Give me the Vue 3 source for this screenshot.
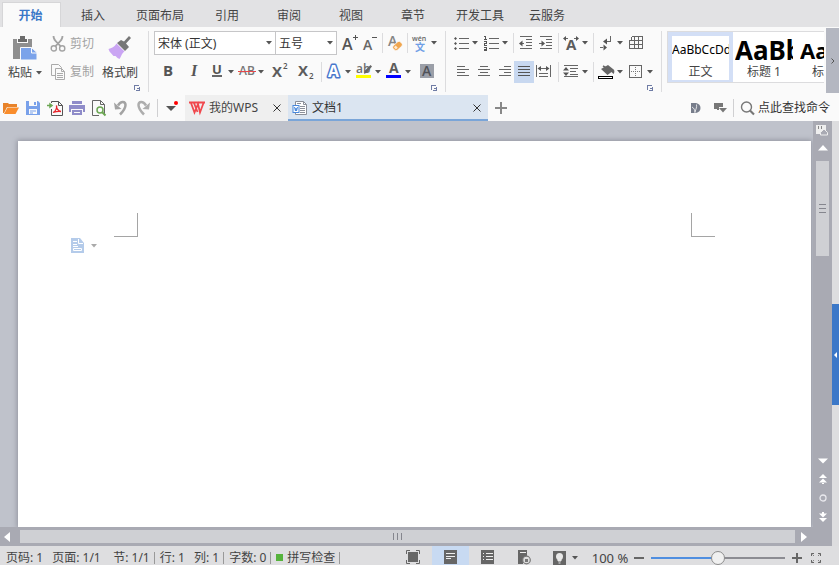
<script setup>
import { ref, computed } from 'vue'

const caret = '<path d="M0 0h6L3 3.600z" fill="#555"/>'

const letter = (x, y, size, text, extra = '') =>
  `<text x="${x}" y="${y}" font-size="${size}" font-family="Open Sans, sans-serif" ${extra}>${text}</text>`

const crisp = (d, color = '#666', width = 1) =>
  `<path d="${d}" fill="none" stroke="${color}" stroke-width="${width}" shape-rendering="crispEdges"/>`

const icons = {
  cut: '<g fill="none" stroke="#a3a3a3" stroke-width="1.4"><circle cx="3.800" cy="12.400" r="2.600"/><circle cx="12.200" cy="12.400" r="2.600"/><path d="M3.500 0c0 4 2 5 7.200 10.300M12.500 0c0 4-2 5-7.200 10.300" stroke-width="1.800"/></g>',
  copy: '<g fill="#fafafa" stroke="#aaa"><path d="M1.500.5h7l3 3v8h-10z"/><path d="M5.500 4.500h6l3 3v8h-9z"/><path d="M11.500 4.500v3h3M7 9.500h6M7 11.500h6M7 13.500h6" fill="none"/></g>',
  grow: letter(0, 15, 16, 'A', 'font-weight="600" fill="#555"') + crisp('M11 2.500h5M13.500 0v5', '#555'),
  shrink: letter(1, 15, 14, 'A', 'font-weight="600" fill="#666"') + crisp('M10 2.500h5', '#555'),
  eraser: letter(1, 11, 14, 'A', 'font-weight="600" fill="#858585"') + '<g transform="rotate(-42 10.500 11)"><rect x="5.500" y="8" width="10" height="6" rx="2" fill="#f0a64f" stroke="#fafafa" stroke-width=".8"/><rect x="7" y="9.500" width="2.500" height="3" fill="#fde9d0"/></g>',
  phonetic: letter(0, 6, 7, 'wén', 'font-weight="600" fill="#666"') + '<text x="3" y="16" font-size="10" font-family="Noto Sans CJK SC, sans-serif" font-weight="700" fill="#6f9fe6">文</text>',
  bold: letter(3, 12, 15, 'B', 'font-weight="700" fill="#555"'),
  italic: '<text x="5" y="12" font-size="16" font-family="Liberation Serif, serif" font-style="italic" font-weight="700" fill="#555">I</text>',
  underline: letter(3, 10, 13, 'U', 'font-weight="700" fill="#555"') + crisp('M3 12h10', '#666', 2),
  strike: letter(0, 11, 12, 'AB', 'font-weight="600" fill="#777"') + crisp('M-1 7.500h18', '#e8474c'),
  superscript: letter(0, 13, 15, 'X', 'font-weight="700" fill="#5c5c5c"') + letter(11, 5, 8, '2', 'font-weight="600" fill="#555"'),
  subscript: letter(0, 12, 15, 'X', 'font-weight="700" fill="#5c5c5c"') + letter(11, 15, 8, '2', 'font-weight="600" fill="#555"'),
  effect: letter(2, 13, 16, 'A', 'font-weight="700" fill="#fff" stroke="#4a78cc" stroke-width="3" stroke-linejoin="round" paint-order="stroke"'),
  highlight: letter(0, 9, 12, 'ab', 'font-weight="600" fill="#707070"') + '<path d="M8 10l1-3.500L14.500 1l1.500 1.500L11 8.500z" fill="#666"/><path d="M0 11h15v3H0z" fill="#ff0"/>',
  color: letter(3, 9, 14, 'A', 'font-weight="700" fill="#5c5c5c"') + '<path d="M0 11h15v3H0z" fill="#00f"/>',
  shade: '<rect x="1" y="0" width="14" height="14" fill="#9b9fa8"/>' + letter(3, 12, 14, 'A', 'font-weight="600" fill="#505259"'),
  bullets: crisp('M6 3.500h10M6 8.500h10M6 13.500h10') + '<path d="M1 3.500L2.500 2 4 3.500 2.500 5zM1 8.500L2.500 7 4 8.500 2.500 10zM1 13.500L2.500 12 4 13.500 2.500 15z" fill="#555"/>',
  numbers: crisp('M6 3.500h10M6 8.500h10M6 13.500h10') + crisp('M1 1.500h1.500M2.500 1v4M1 4.500h3M1 6.500h2.500M3.500 6v2M1 8.500h2.500M1.500 8v2M1 10.500h3M1 12.500h2.500M3.500 12v4M1 14h2.500M1 15.500h3', '#555'),
  outdent: crisp('M2 1.500h12M8 4.500h6M8 7.500h6M8 10.500h6M2 13.500h12M2 8.500h4') + '<path d="M1 8.500L4.500 5.500v6z" fill="#555"/>',
  indent: crisp('M2 1.500h12M8 4.500h6M8 7.500h6M8 10.500h6M2 13.500h12M1 8.500h4') + '<path d="M7 8.500L3.500 5.500v6z" fill="#555"/>',
  scale: letter(3, 15, 15, 'A', 'font-weight="700" fill="#5c5c5c"') + crisp('M1 3.500h4M11 3.500h4') + '<path d="M0 3.500L3 1v5zM16 3.500L13 1v5z" fill="#555"/>',
  wrap: crisp('M12.500 1v5H8M2 12.500h3', '#666') + '<path d="M5 6.500l4-3v6zM9 12.500l-3.500-3v6z" fill="#555"/>',
  table: crisp('M3.500 1.500h11v12h-13v-8M3.500 1.500v4M1 5.500h14M1 9.500h14M6.500 1.500v12M10.500 1.500v12'),
  left: crisp('M1 2.500h8M1 5.500h12M1 8.500h8M1 11.500h12'),
  center: crisp('M4 2.500h8M2 5.500h12M4 8.500h8M2 11.500h12'),
  right: crisp('M8 2.500h7M3 5.500h12M8 8.500h7M3 11.500h12'),
  justify: crisp('M2 2.500h12M2 5.500h12M2 8.500h12M2 11.500h12', '#555'),
  distribute: crisp('M.5 1v12M14.500 1v12M3 4.500h9M3 9.500h9M3 12.500h9') + '<path d="M1.500 4.500L5 2v5zM13.500 4.500L10 2v5z" fill="#555"/>',
  spacing: crisp('M1 1.500h14M7 4.500h8M7 7.500h6M7 10.500h8M1 12.500h14') + '<path d="M0 6.500l3-3.500 3 3.500zM0 8.500L3 12l3-3.500z" fill="#555"/>',
  bucket: '<path d="M3 5l7-4 5 4c2 1 1.500 4 .5 5l-2-2-4 3z" fill="#666"/><path d="M5 2l5 3" stroke="#666" stroke-width="1.500"/><rect x=".500" y="12.500" width="14" height="2" fill="#fff" stroke="#000" shape-rendering="crispEdges"/>',
  border: crisp('M1.500 1.500h12v12h-12z') + '<path d="M7.500 3v10M3 7.500h10" stroke="#777" stroke-dasharray="1 1" fill="none" shape-rendering="crispEdges"/>',
  open: '<path d="M0 3h5l1 1h8v3H4l-3 6H0z" fill="#e8832a"/><path d="M4.500 7.500H16L12.500 14H1z" fill="#f98d2c"/>',
  save: '<path d="M1 1h12l2 2v12H1z" fill="#79a1ea"/><path d="M4 1h8v5H4zM4 9h8v5H4z" fill="#fafafa"/><path d="M9 2h2v3H9z" fill="#79a1ea"/><path d="M5 11h6M5 13h3" stroke="#79a1ea"/>',
  pdf: '<path d="M4.500 3V1.500h7l4 4v10h-11V9" fill="none" stroke="#555"/><path d="M11.500 1.500v4h4" fill="none" stroke="#555"/><path d="M6 12.500c3-1 4-5 3.500-7 0 3 2 5.500 4.500 6-3-.5-5 0-8 1z" fill="none" stroke="#e8262d" stroke-width="1.300"/><path d="M0 5.500h3M3 4l2 1.500L3 7z" fill="#6ba652" stroke="#6ba652" stroke-width="1.500"/>',
  print: '<path d="M3 1h10v3H3zM0 5h16v7h-2V9H2v3H0zM3 10h10v5H3z" fill="#8f8cc9"/><path d="M5 12.500h6" stroke="#fafafa"/>',
  preview: '<path d="M8 15.500H1.500v-15h8l4 4v10M9.500.5v4h4" fill="none" stroke="#666"/><circle cx="9" cy="10" r="3" fill="#fafafa" stroke="#6ba652" stroke-width="1.500"/><path d="M11 12l3.500 3.500" stroke="#6ba652" stroke-width="2"/>',
  undo: '<path d="M5 5.500c3-5 7.500-4 7.500-.5 0 4-3 7-5.500 9.500" fill="none" stroke="#a3a3a3" stroke-width="2.500"/><path d="M1 2.500l1 7 6.500-.5z" fill="#a3a3a3"/>',
  redo: '<path d="M11 5.500C8 .5 3.500 1.500 3.500 5c0 4 3 7 5.500 9.500" fill="none" stroke="#adadad" stroke-width="2.500"/><path d="M15 2.500l-1 7L7.500 9z" fill="#adadad"/>',
  wps: '<path d="M0 2.500h16M2 3l3.500 9.500L9 4l2 8.500L14.500 3M5 3l3.500 9" fill="none" stroke="#f0484d" stroke-width="1.800"/>',
  doc: '<path d="M3.500 5V1.500h8l3 3v10h-11V12" fill="#fff" stroke="#8b8f99"/><path d="M11.500 1.500v3h3M8 6.500h5M8 8.500h5M8 10.500h5M8 12.500h5M5 3.500h4" fill="none" stroke="#8b8f99"/><rect x="1" y="5.500" width="6" height="7" fill="#fff" stroke="#4787dc"/><path d="M2.500 7l1 4L4 8l.5 3 1-4" stroke="#4787dc" fill="none"/>',
  docer: '<path d="M4 3h5c6 1 6 9 0 10H4z" fill="#777d8b"/><path d="M5 7c2 1 3 3 3 6M9.500 4.500C10 7 9 9 8 12" stroke="#fafafa" fill="none" stroke-width=".800"/>',
  skin: '<path d="M3 3h9v4H8v3H6V9H3z" fill="#777"/><path d="M8 8h8l-4 4.500z" fill="#777"/>',
  search: '<circle cx="6.500" cy="7" r="5" fill="none" stroke="#777" stroke-width="1.400"/><path d="M10 10.500l4 4" stroke="#777" stroke-width="2.200"/>',
  full: '<path d="M.5 5V1.500H4M10 1.500h3.500V5M13.500 11v3.500H10M4 14.500H.5V11" fill="none" stroke="#666"/><rect x="2" y="3" width="10" height="10" fill="#666"/>',
  page: '<rect x="1" y="1" width="13" height="14" fill="#666"/><path d="M3 4.500h9M3 7.500h9M3 9.500h5" stroke="#eee"/>',
  outline: '<rect x="1" y="1" width="13" height="14" fill="#666"/><path d="M3 4.500h1M6 4.500h7M3 7.500h1M6 7.500h7M3 10.500h1M6 10.500h7" stroke="#eee"/>',
  web: '<path d="M1 1h9v6l-4 3v5H1z" fill="#666"/><path d="M3 3.500h6" stroke="#eee"/><circle cx="9.500" cy="11" r="3.800" fill="#ddd" stroke="#777" stroke-width="1.200"/><path d="M8 10h3v3H8z" fill="#777"/>',
  lamp: '<rect x="1" y="1" width="13" height="14" fill="#666"/><circle cx="7.500" cy="6.500" r="3.500" fill="#e8e8e8"/><path d="M6 9h3v2H6zM6.500 13h2" fill="#e8e8e8" stroke="#e8e8e8"/>',
  expand: '<path d="M3.500 6V3.500H6M10 3.500h2.500V6M12.500 10v2.500H10M6 12.500H3.500V10" fill="none" stroke="#666"/><path d="M3 3l3 3M13 3l-3 3M13 13l-3-3M3 13l3-3" stroke="#777" stroke-dasharray="2 1"/>',
  ruler: '<path d="M0 1h10v9H0z" fill="#eee"/><path d="M2.500 2v3M5.500 2v3" stroke="#888"/><path d="M4.500 8.500L8 5l3.500 3.500v2.500h-7z" fill="#a9aab3" stroke="#eee"/>',
  para: '<path d="M1 0h9l4 5v10H1z" fill="#b4cbea"/><path d="M3 3.500h4M3 6.500h4M3 8.500h5M3.500 10.500h8v2h-8zM8.500 1v4.500H13" fill="none" stroke="#fff"/>'
}

const tabs = ['开始', '插入', '页面布局', '引用', '审阅', '视图', '章节', '开发工具', '云服务']
const activeTab = ref('开始')

const fontRow1 = [
  { icon: 'grow', label: '增大字号' },
  { icon: 'shrink', label: '减小字号' },
  { sep: true },
  { icon: 'eraser', label: '清除格式' },
  { sep: true },
  { icon: 'phonetic', label: '拼音指南', drop: true }
]
const fontRow2 = [
  { icon: 'bold', label: '加粗', size: 'wide' },
  { icon: 'italic', label: '倾斜', size: 'wide' },
  { icon: 'underline', label: '下划线', drop: true },
  { icon: 'strike', label: '删除线', drop: true },
  { icon: 'superscript', label: '上标', size: 'wide' },
  { icon: 'subscript', label: '下标', size: 'wide' },
  { sep: true },
  { icon: 'effect', label: '文字效果', drop: true },
  { icon: 'highlight', label: '突出显示', drop: true },
  { icon: 'color', label: '字体颜色', drop: true },
  { icon: 'shade', label: '字符底纹', size: 'wide' }
]
const paraRow1 = [
  { icon: 'bullets', label: '项目符号', drop: true },
  { icon: 'numbers', label: '编号', drop: true },
  { sep: true },
  { icon: 'outdent', label: '减少缩进量' },
  { icon: 'indent', label: '增加缩进量' },
  { sep: true },
  { icon: 'scale', label: '中文版式', drop: true },
  { sep: true },
  { icon: 'wrap', label: '换行', drop: true },
  { icon: 'table', label: '表格' }
]
const paraRow2 = [
  { icon: 'left', label: '左对齐' },
  { icon: 'center', label: '居中' },
  { icon: 'right', label: '右对齐' },
  { icon: 'justify', label: '两端对齐', on: true },
  { icon: 'distribute', label: '分散对齐' },
  { sep: true },
  { icon: 'spacing', label: '行距', drop: true },
  { sep: true },
  { icon: 'bucket', label: '填充', drop: true },
  { icon: 'border', label: '边框', drop: true }
]
const quick = [
  ['open', '打开'], ['save', '保存'], ['pdf', '输出为PDF'], ['print', '打印'],
  ['preview', '打印预览'], ['undo', '撤销'], ['redo', '恢复']
]
const styles = [
  { name: '正文', sample: 'AaBbCcDd', cls: 'body' },
  { name: '标题 1', sample: 'AaBb', cls: 'h1' },
  { name: '标题 2', sample: 'AaBb', cls: 'h2' }
]
const views = [['page', '页面视图'], ['outline', '大纲视图'], ['web', 'Web版式']]
const activeView = ref('page')
const zoom = ref(100)
const trackFill = computed(() => ({ '--fill': zoom.value / 2 + '%' }))
</script>

<template>
  <div class="app">
    <nav class="tabs">
      <button v-for="t in tabs" :key="t" class="tab" :class="{ active: t === activeTab }" @click="activeTab = t">{{ t }}</button>
    </nav>

    <section class="ribbon">
      <div class="group clipboard">
        <button class="big paste">
          <svg width="26" height="26" viewBox="0 0 26 26">
            <path d="M1 4h19v20H1z" fill="#8f8f8f" />
            <path d="M5 3h11v5H5z" fill="#fafafa" />
            <path d="M6 4h2V1h5v3h2v3H6z" fill="#6b6b6b" />
            <path d="M8.500 12.500h11l5.500 5V25H8.500z" fill="#7ba3ea" stroke="#fafafa" />
            <path d="M19.500 12.500v5.500H25" fill="none" stroke="#fafafa" />
          </svg>
          <span>粘贴<svg class="caret" width="6" height="4" viewBox="0 0 6 4" v-html="caret"></svg></span>
        </button>
        <div class="stack">
          <button class="small"><svg width="16" height="16" viewBox="0 0 16 16" v-html="icons.cut"></svg>剪切</button>
          <button class="small"><svg width="16" height="16" viewBox="0 0 16 16" v-html="icons.copy"></svg>复制</button>
        </div>
        <button class="big">
          <svg width="26" height="26" viewBox="0 0 26 26">
            <path d="M14 5l3 1.500L22 1l2 2-5 5.500L22 12l-4 4-8-8z" fill="#777" />
            <path d="M9.500 8.500l8 8c-3 2-3 5-5 7.500l-2-1-2-2-2 0-4-4.500-1-2.500c3-1 6-2 8-5.500z" fill="#caa5f3" />
          </svg>
          <span>格式刷</span>
        </button>
        <button class="launcher" aria-label="剪贴板设置"><svg width="6" height="6" viewBox="0 0 6 6"><path d="M.5 5V.5H5M5.500 2v3.500H2M3 3h2v2" fill="none" stroke="#6f7ca5" shape-rendering="crispEdges" /></svg></button>
      </div>

      <div class="group font">
        <div class="row">
          <label class="combo family"><select aria-label="字体"><option>宋体 (正文)</option></select><svg width="6" height="4" viewBox="0 0 6 4" v-html="caret"></svg></label>
          <label class="combo size"><select aria-label="字号"><option>五号</option></select><svg width="6" height="4" viewBox="0 0 6 4" v-html="caret"></svg></label>
          <template v-for="(t, i) in fontRow1" :key="i">
            <i v-if="t.sep" class="sep"></i>
            <button v-else class="tool" :aria-label="t.label">
              <span class="ico"><svg width="16" height="16" viewBox="0 0 16 16" v-html="icons[t.icon]"></svg></span>
              <svg v-if="t.drop" class="drop" width="6" height="4" viewBox="0 0 6 4" v-html="caret"></svg>
            </button>
          </template>
        </div>
        <div class="row second letters">
          <template v-for="(t, i) in fontRow2" :key="i">
            <i v-if="t.sep" class="sep"></i>
            <button v-else class="tool" :aria-label="t.label">
              <span class="ico" :class="t.size"><svg width="16" height="16" viewBox="0 0 16 16" v-html="icons[t.icon]"></svg></span>
              <svg v-if="t.drop" class="drop" width="6" height="4" viewBox="0 0 6 4" v-html="caret"></svg>
            </button>
          </template>
        </div>
        <button class="launcher" aria-label="字体设置"><svg width="6" height="6" viewBox="0 0 6 6"><path d="M.5 5V.5H5M5.500 2v3.500H2M3 3h2v2" fill="none" stroke="#6f7ca5" shape-rendering="crispEdges" /></svg></button>
      </div>

      <div class="group paragraph">
        <div class="row">
          <template v-for="(t, i) in paraRow1" :key="i">
            <i v-if="t.sep" class="sep"></i>
            <button v-else class="tool" :aria-label="t.label">
              <span class="ico"><svg width="16" height="16" viewBox="0 0 16 16" v-html="icons[t.icon]"></svg></span>
              <svg v-if="t.drop" class="drop" width="6" height="4" viewBox="0 0 6 4" v-html="caret"></svg>
            </button>
          </template>
        </div>
        <div class="row second aligns">
          <template v-for="(t, i) in paraRow2" :key="i">
            <i v-if="t.sep" class="sep"></i>
            <button v-else class="tool" :class="{ on: t.on }" :aria-label="t.label">
              <span class="ico"><svg width="16" height="16" viewBox="0 0 16 16" v-html="icons[t.icon]"></svg></span>
              <svg v-if="t.drop" class="drop" width="6" height="4" viewBox="0 0 6 4" v-html="caret"></svg>
            </button>
          </template>
        </div>
        <button class="launcher" aria-label="段落设置"><svg width="6" height="6" viewBox="0 0 6 6"><path d="M.5 5V.5H5M5.500 2v3.500H2M3 3h2v2" fill="none" stroke="#6f7ca5" shape-rendering="crispEdges" /></svg></button>
      </div>

      <div class="gallery">
        <button v-for="(s, i) in styles" :key="s.name" class="style" :class="{ chosen: i === 0 }">
          <span class="sample" :class="s.cls">{{ s.sample }}</span>
          <span class="name">{{ s.name }}</span>
        </button>
      </div>
      <button class="more" aria-label="更多"><svg width="4" height="6" viewBox="0 0 4 6"><path d="M.5 .5L3 3 .5 5.500" fill="none" stroke="#555" /></svg></button>
    </section>

    <section class="quickbar">
      <button v-for="q in quick" :key="q[0]" class="quick" :aria-label="q[1]"><svg width="16" height="16" viewBox="0 0 16 16" v-html="icons[q[0]]"></svg></button>
      <i class="bar"></i>
      <button class="custom" aria-label="自定义快速访问"><svg width="14" height="16" viewBox="0 0 14 16"><path d="M0 6h10l-5 5z" fill="#555" /><circle cx="10" cy="3" r="2" fill="#f00" /></svg></button>
      <div class="file home">
        <svg width="16" height="16" viewBox="0 0 16 16" v-html="icons.wps"></svg>
        <span>我的WPS</span>
        <button aria-label="关闭"><svg width="8" height="8" viewBox="0 0 8 8"><path d="M.5 .5l7 7M7.500 .5l-7 7" stroke="#333" /></svg></button>
      </div>
      <div class="file current">
        <svg width="16" height="16" viewBox="0 0 16 16" v-html="icons.doc"></svg>
        <span>文档1</span>
        <button aria-label="关闭"><svg width="8" height="8" viewBox="0 0 8 8"><path d="M.5 .5l7 7M7.500 .5l-7 7" stroke="#333" /></svg></button>
      </div>
      <button class="add" aria-label="新建"><svg width="12" height="12" viewBox="0 0 12 12"><path d="M0 6h12M6 0v12" stroke="#888" stroke-width="2" /></svg></button>
      <div class="tail">
        <button aria-label="稻壳"><svg width="16" height="16" viewBox="0 0 16 16" v-html="icons.docer"></svg></button>
        <button aria-label="皮肤"><svg width="16" height="16" viewBox="0 0 16 16" v-html="icons.skin"></svg></button>
        <i class="bar"></i>
        <button class="find"><svg width="16" height="16" viewBox="0 0 16 16" v-html="icons.search"></svg>点此查找命令</button>
      </div>
    </section>

    <section class="workspace">
      <div class="main">
        <div class="canvas">
          <article class="sheet">
            <div class="marks"><i class="mark start"></i><i class="mark end"></i></div>
            <button class="parabtn" aria-label="段落布局">
              <svg width="15" height="15" viewBox="0 0 15 15" v-html="icons.para"></svg>
              <svg width="6" height="4" viewBox="0 0 6 4"><path d="M0 0h6L3 3.600z" fill="#aaa" /></svg>
            </button>
          </article>
        </div>
        <div class="hscroll">
          <button aria-label="向左"><svg width="6" height="10" viewBox="0 0 6 10"><path d="M6 0v10L0 5z" fill="#fff" /></svg></button>
          <div class="hthumb"><i></i><i></i><i></i></div>
          <button aria-label="向右"><svg width="6" height="10" viewBox="0 0 6 10"><path d="M0 0v10l6-5z" fill="#fff" /></svg></button>
        </div>
      </div>
      <div class="vscroll">
        <button aria-label="标尺"><svg width="14" height="14" viewBox="0 0 14 14" v-html="icons.ruler"></svg></button>
        <button aria-label="向上"><svg width="10" height="6" viewBox="0 0 10 6"><path d="M0 5.500h10L5 0z" fill="#fff" /></svg></button>
        <div class="vthumb"><i></i><i></i><i></i></div>
        <div class="lower">
          <button aria-label="向下"><svg width="10" height="6" viewBox="0 0 10 6"><path d="M0 .5h10L5 5.500z" fill="#fff" /></svg></button>
          <button aria-label="上一页"><svg width="8" height="10" viewBox="0 0 8 10"><path d="M0 4h8L4 0zM0 8.500h8l-4-4zM3 8h2v2H3z" fill="#fff" /></svg></button>
          <button aria-label="选择浏览对象"><svg width="8" height="8" viewBox="0 0 8 8"><circle cx="4" cy="4" r="3" fill="none" stroke="#e9e9ee" stroke-width="1.300" /></svg></button>
          <button aria-label="下一页"><svg width="8" height="10" viewBox="0 0 8 10"><path d="M0 1.500h8l-4 4zM0 6h8l-4 4zM3 0h2v2H3z" fill="#fff" /></svg></button>
        </div>
      </div>
      <aside class="edge"><button aria-label="任务窗格"><svg width="3" height="6" viewBox="0 0 3 6"><path d="M3 0v6L0 3z" fill="#fff" /></svg></button></aside>
    </section>

    <footer class="status">
      <span class="cell">页码: 1</span>
      <span class="cell long">页面: 1/1</span>
      <span class="cell ruled">节: 1/1</span>
      <span class="cell">行: 1</span>
      <span class="cell ruled">列: 1</span>
      <span class="cell ruled">字数: 0</span>
      <span class="cell ruled spell"><i></i>拼写检查</span>
      <div class="right">
        <button class="view" aria-label="全屏"><svg width="16" height="16" viewBox="0 0 16 16" v-html="icons.full"></svg></button>
        <button v-for="v in views" :key="v[0]" class="view" :class="{ active: v[0] === activeView }" :aria-label="v[1]" @click="activeView = v[0]"><svg width="16" height="16" viewBox="0 0 16 16" v-html="icons[v[0]]"></svg></button>
        <button class="lamp" aria-label="护眼模式"><svg width="16" height="16" viewBox="0 0 16 16" v-html="icons.lamp"></svg><svg width="6" height="4" viewBox="0 0 6 4" v-html="caret"></svg></button>
        <button class="pct">{{ zoom }} %</button>
        <button class="step" aria-label="缩小" @click="zoom -= 10"><svg width="12" height="12" viewBox="0 0 12 12"><path d="M1 6h10" stroke="#666" stroke-width="2" /></svg></button>
        <input v-model.number="zoom" class="slider" :style="trackFill" type="range" min="0" max="200" aria-label="缩放" />
        <button class="step" aria-label="放大" @click="zoom += 10"><svg width="12" height="12" viewBox="0 0 12 12"><path d="M1 6h10M6 1v10" stroke="#666" stroke-width="2" /></svg></button>
        <button class="step" aria-label="适应窗口"><svg width="16" height="16" viewBox="0 0 16 16" v-html="icons.expand"></svg></button>
      </div>
    </footer>
  </div>
</template>

<style>
body {
  margin: 0;
}
</style>

<style scoped>
.app {
  display: flex;
  flex-direction: column;
  height: 100vh;
  overflow: hidden;
  background: #fafafa;
  color: #444;
  font: 12px/16px "Noto Sans", "Noto Sans CJK SC", sans-serif;
}
.app * {
  box-sizing: border-box;
}
svg {
  display: block;
  flex: none;
  overflow: visible;
}
button {
  display: flex;
  align-items: center;
  justify-content: center;
  padding: 0;
  border: 0;
  background: none;
  color: inherit;
  font: inherit;
  white-space: nowrap;
}
.tabs {
  display: flex;
  flex: none;
  height: 27px;
  padding-top: 2px;
  background: #e2e2e4;
}
.tab {
  min-width: 62px;
  padding: 2px 12px 0;
}
.tab.active {
  min-width: 59px;
  margin: 0 1px 0 2px;
  padding-right: 14px;
  border: 1px solid #d6d6d8;
  border-bottom: 0;
  background: #fafafa;
  color: #3a78c8;
  font-weight: 700;
}
.ribbon {
  display: flex;
  flex: none;
  height: 68px;
  padding-top: 1px;
}
.group {
  position: relative;
  flex: none;
  margin: 3px 0;
  border-right: 1px solid #dcdcde;
}
.clipboard {
  display: flex;
  width: 149px;
  padding-left: 6px;
}
.big {
  flex-direction: column;
  justify-content: flex-start;
  gap: 4px;
  width: 38px;
  padding-top: 4px;
}
.big span {
  display: flex;
  align-items: center;
  gap: 4px;
}
.stack {
  display: flex;
  flex-direction: column;
  gap: 12px;
  margin: 5px 7px 0 6px;
}
.small {
  gap: 4px;
  color: #a3a3a3;
}
.launcher {
  position: absolute;
  right: 8px;
  bottom: 1px;
}
.font {
  width: 297px;
  padding-left: 5px;
}
.paragraph {
  width: 216px;
  padding-left: 5px;
}
.row {
  display: flex;
  align-items: center;
  height: 24px;
}
.row.second {
  height: 22px;
  margin-top: 6px;
}
.letters {
  padding-left: 1px;
}
.aligns {
  padding-left: 3px;
}
.aligns .sep:nth-of-type(1) {
  margin-left: 4px;
}
.tool {
  height: 22px;
}
.tool.on {
  background: #c8d8f0;
}
.ico {
  display: flex;
  justify-content: center;
  width: 20px;
}
.ico.wide {
  width: 26px;
}
.drop {
  margin: 0 3px 0 1px;
}
.sep {
  flex: none;
  width: 1px;
  height: 20px;
  margin: 0 2px;
  background: #dcdcde;
}
.combo {
  display: grid;
  align-items: center;
  height: 24px;
  border: 1px solid #c6c6c8;
  background: #fff;
}
.combo > * {
  grid-area: 1 / 1;
}
.combo > svg {
  justify-self: end;
  margin-right: 3px;
  pointer-events: none;
}
.combo select {
  width: 100%;
  padding: 2px 3px 0;
  border: 0;
  background: none;
  appearance: none;
  color: #333;
  font: inherit;
}
.family {
  width: 122px;
}
.size {
  width: 61px;
  margin-right: 3px;
  border-left: 0;
}
.gallery {
  display: flex;
  flex: 1;
  min-width: 0;
  height: 52px;
  margin: 3px 2px 0 5px;
  border: 1px solid #dcdcde;
  border-right: 0;
  background: #fff;
  overflow: hidden;
}
.style {
  flex: none;
  flex-direction: column;
  justify-content: flex-end;
  width: 65px;
  padding: 0 5px 2px 2px;
  overflow: hidden;
}
.style.chosen {
  padding: 0;
  border: 4px solid #d3dff6;
  border-bottom-width: 2px;
}
.sample {
  display: flex;
  align-items: center;
  align-self: stretch;
  height: 29px;
  color: #000;
  overflow: hidden;
}
.sample.h1 {
  font-size: 26px;
  font-weight: 700;
}
.sample.h2 {
  font-size: 22px;
  font-weight: 700;
}
.more {
  flex: none;
  width: 13px;
  height: 65px;
  background: #b4b7c1;
}
.quickbar {
  display: flex;
  flex: none;
  align-items: center;
  height: 26px;
}
.quick {
  width: 22px;
}
.bar {
  width: 1px;
  height: 18px;
  margin: 0 3px;
  background: #d0d0d2;
}
.custom {
  width: 24px;
}
.file {
  display: flex;
  align-items: center;
  gap: 4px;
  height: 26px;
  padding: 0 7px 0 4px;
}
.file button {
  margin-left: auto;
}
.home {
  width: 103px;
  background: #efefef;
}
.current {
  width: 200px;
  padding-top: 2px;
  border-bottom: 2px solid #7aa5d8;
  background: #dbe5f1;
  color: #333;
}
.add {
  width: 26px;
}
.tail {
  display: flex;
  align-items: center;
  gap: 8px;
  margin-left: auto;
  padding-right: 9px;
}
.tail .bar {
  margin: 0 -2px;
}
.find {
  gap: 2px;
  color: #333;
}
.workspace {
  display: flex;
  flex: 1;
  min-height: 0;
}
.main {
  display: flex;
  flex: 1;
  flex-direction: column;
  min-width: 0;
}
.canvas {
  display: flex;
  flex: 1;
  min-height: 0;
  padding: 20px 2px 0 18px;
  background: #bfc2cb;
  overflow: hidden;
}
.sheet {
  flex: 1;
  padding: 72px 96px 0;
  background: #fff;
  box-shadow: 0 0 5px 1px #92949f;
}
.marks {
  display: flex;
  justify-content: space-between;
}
.mark {
  width: 24px;
  height: 24px;
  border-bottom: 1px solid #a5a5a5;
}
.start {
  border-right: 1px solid #a5a5a5;
}
.end {
  border-left: 1px solid #a5a5a5;
}
.parabtn {
  gap: 6px;
  margin: 1px 0 0 -44px;
}
.hscroll {
  display: flex;
  flex: none;
  align-items: center;
  height: 19px;
  background: #a9aab3;
}
.hscroll button {
  width: 14px;
}
.hscroll button:last-child {
  width: 18px;
}
.hthumb {
  display: flex;
  flex: 1;
  align-items: center;
  justify-content: center;
  gap: 3px;
  height: 13px;
  margin-left: 6px;
  padding-right: 20px;
  background: #cfd0d4;
}
.hthumb i {
  width: 1px;
  height: 7px;
  background: #85868e;
}
.vscroll {
  display: flex;
  flex: none;
  flex-direction: column;
  align-items: center;
  width: 19px;
  padding: 3px 0 24px;
  background: #a9aab3;
}
.vscroll > button + button {
  margin: 7px 0 10px;
}
.vthumb {
  display: flex;
  flex-direction: column;
  align-items: center;
  justify-content: center;
  gap: 3px;
  width: 13px;
  height: 95px;
  background: #cfd0d4;
}
.vthumb i {
  width: 7px;
  height: 1px;
  background: #85868e;
}
.lower {
  display: flex;
  flex-direction: column;
  align-items: center;
  gap: 10px;
  margin-top: auto;
}
.edge {
  display: flex;
  flex: none;
  align-items: center;
  width: 7px;
  padding-top: 42px;
  background: #dddddf;
}
.edge button {
  width: 7px;
  height: 101px;
  background: #3c78c8;
}
.status {
  display: flex;
  flex: none;
  align-items: center;
  height: 19px;
  padding: 4px 0 0 6px;
  background: #dedee0;
}
.cell {
  display: flex;
  align-items: center;
  height: 12px;
  margin-right: 9px;
  white-space: nowrap;
}
.cell.long {
  min-width: 52px;
}
.ruled {
  margin-right: 5px;
  padding-right: 4px;
  border-right: 1px solid #999;
}
.spell {
  gap: 4px;
}
.spell i {
  width: 7px;
  height: 7px;
  background: #56b33c;
}
.right {
  display: flex;
  align-items: center;
  margin-left: auto;
  padding-right: 15px;
}
.view {
  width: 37px;
  height: 19px;
  padding-top: 2px;
  margin-top: -4px;
}
.view.active {
  background: #c8daf2;
}
.lamp {
  gap: 4px;
  width: 36px;
  margin: 0 6px 0 4px;
}
.pct {
  width: 42px;
  font-size: 13px;
}
.step {
  width: 16px;
}
.step:last-child {
  margin-left: 3px;
}
.slider {
  width: 134px;
  height: 14px;
  margin: 0 4px;
  background: none;
  appearance: none;
}
.slider::-webkit-slider-runnable-track {
  height: 2px;
  background: linear-gradient(to right, #4f8ee0 var(--fill), #8c8c92 var(--fill));
}
.slider::-webkit-slider-thumb {
  width: 14px;
  height: 14px;
  margin-top: -6px;
  border: 1px solid #8c8c8c;
  border-radius: 50%;
  background: #f0f0f0;
  appearance: none;
}
</style>
